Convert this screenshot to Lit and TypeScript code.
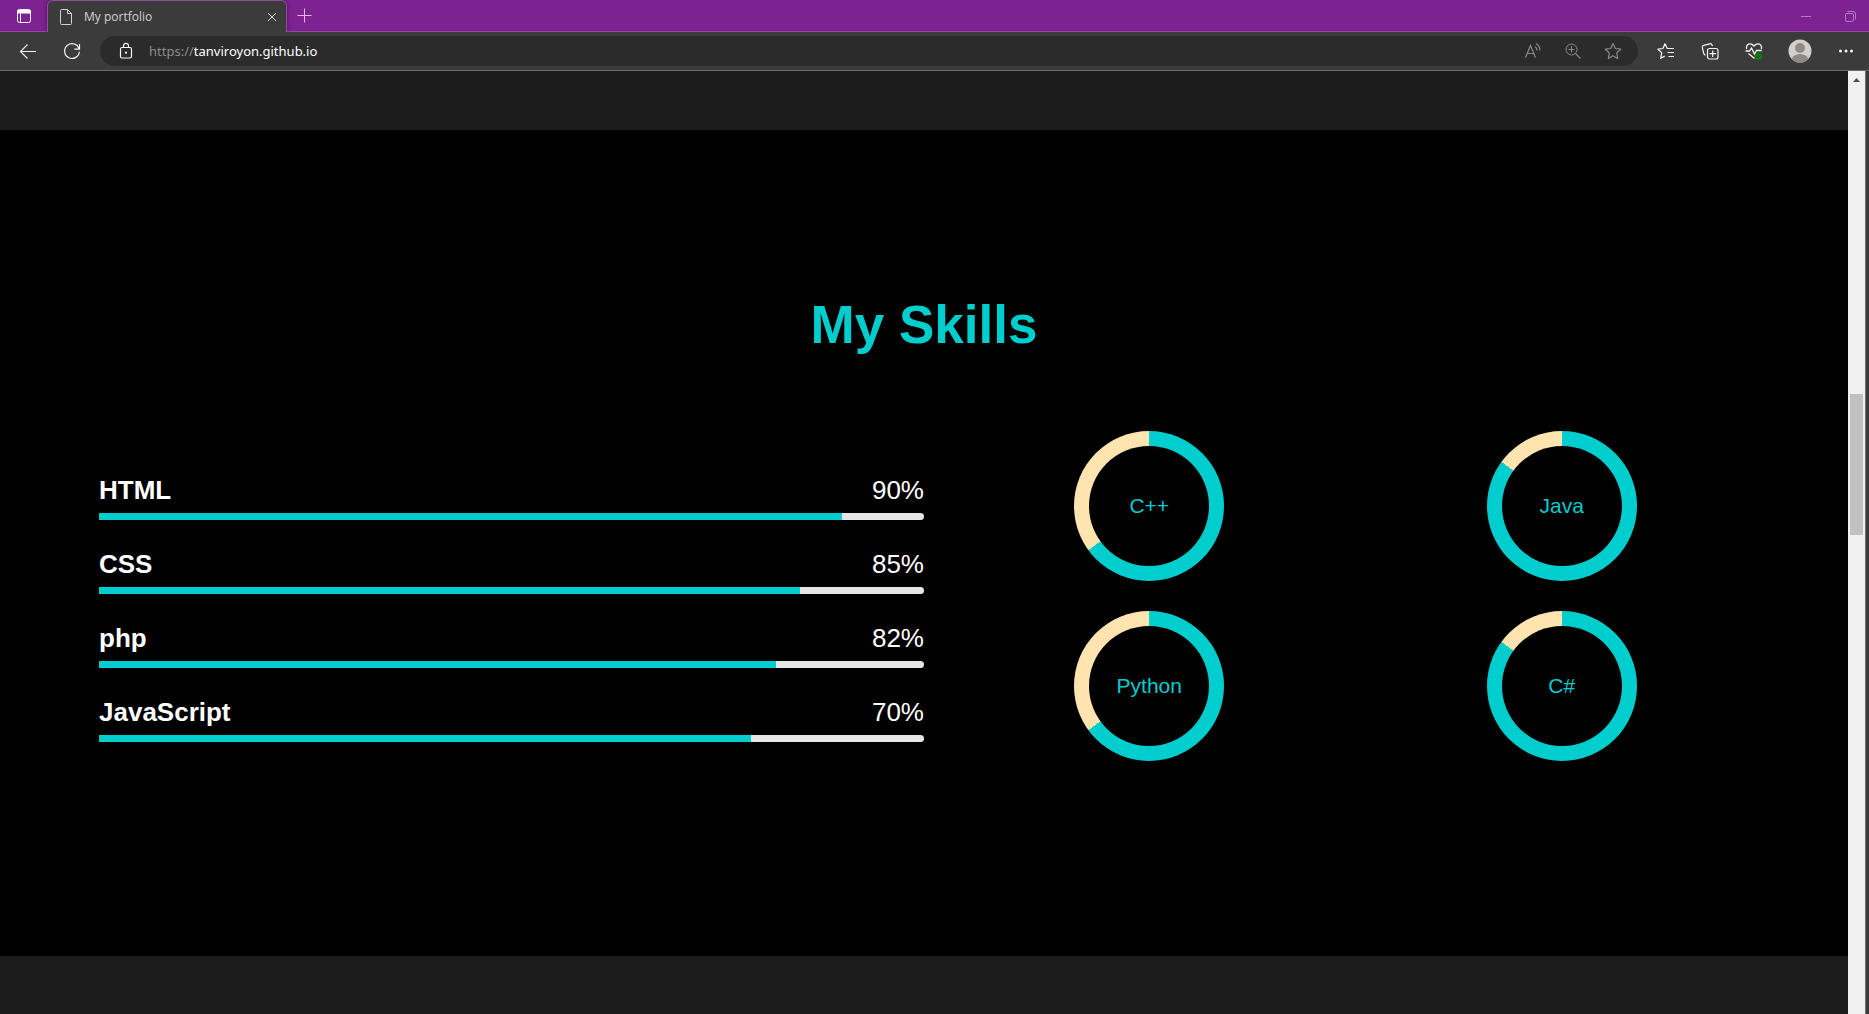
import { LitElement, html, css, svg } from "lit";
import { customElement, property } from "lit/decorators.js";

interface Skill {
  name: string;
  label: string;
  fill: number;
}

const BARS: Skill[] = [
  { name: "HTML", label: "90%", fill: 90 },
  { name: "CSS", label: "85%", fill: 85 },
  { name: "php", label: "82%", fill: 82 },
  { name: "JavaScript", label: "70%", fill: 79 },
];

const RINGS = [
  { name: "C++", fill: 65 },
  { name: "Java", fill: 85 },
  { name: "Python", fill: 65 },
  { name: "C#", fill: 85 },
];

const GLYPHS = {
  tabs: svg`<rect x="3.5" y="3.5" width="13" height="13" rx="2"/><path d="M3.5 4.5h13v2.5h-13z" fill="currentColor"/><path d="M6.5 7v9.5"/>`,
  file: svg`<path d="M5.5 2.5h6l4 4v10a1 1 0 0 1-1 1h-9a1 1 0 0 1-1-1v-13a1 1 0 0 1 1-1zM11.5 2.5v4h4"/>`,
  close: svg`<path d="M6 6l8 8M14 6l-8 8"/>`,
  plus: svg`<path d="M10.5 3.5v14M3.5 10.5h14"/>`,
  minimise: svg`<path d="M5 10.5h10"/>`,
  restore: svg`<rect x="5.5" y="7.5" width="8" height="8" rx="1.5"/><path d="M7.5 5.5h5.5a2.5 2.5 0 0 1 2.5 2.5v5.5"/>`,
  back: svg`<path d="M18 10.5H2.5M9.5 3.5l-7 7 7 7" stroke-width="1.1"/>`,
  reload: svg`<path d="M17.2 8.200A7.4 7.4 0 1 0 17.4 10.8M17.5 3v5.2h-5.2" stroke-width="1.2"/>`,
  lock: svg`<rect x="4.5" y="6.5" width="11" height="10.5" rx="1.5" stroke-width="1.2"/><path d="M7.500 6.5V4.800a2.500 2.500 0 0 1 5 0v1.7" stroke-width="1.2"/><circle cx="10" cy="11.7" r="1.1" fill="currentColor" stroke="none"/>`,
  read: svg`<path d="M2.500 16.500L7.500 4.500l5 12M4.200 12.500h6.600M12 5.500a5 5 0 0 1 2 4M13 2.500a8 8 0 0 1 4 7" stroke-width="1.2"/>`,
  zoom: svg`<circle cx="8.500" cy="8.500" r="5.500"/><path d="M12.500 12.500l5 5M8.500 5.500v6M5.500 8.500h6" stroke-width="1.1"/>`,
  star: svg`<path d="M10 2.500l2.300 5 5.400.7-4 3.800 1 5.500L10 14.800l-4.700 2.700 1-5.500-4-3.800 5.400-.7z" stroke-width="1.2" stroke-linejoin="round"/>`,
  favorites: svg`<path d="M12.200 7.500H11.300L9 2.700 6.900 7.500l-4.900.7 3.700 3.600-1 5.500 4-2.200M11.500 7.500H18M11.500 11.500H18M12.500 15.500H18" stroke-width="1.2" stroke-linejoin="round"/>`,
  collections: svg`<rect x="7.500" y="7.500" width="10.500" height="10.500" rx="2" stroke-width="1.2"/><path d="M12.700 9.500v6.500M9.500 12.700h6.500M5.600 14a2 2 0 0 1-1.800-1.500L2.300 6.700a2 2 0 0 1 1.400-2.300l6-1.600a2 2 0 0 1 2.400 1.400l.3 1" stroke-width="1.2"/>`,
  health: svg`<path d="M2.600 8C1.800 4.500 4 2.900 6 2.900c1.800 0 3 1 4 2.100 1-1.100 2.200-2.100 4-2.100 2 0 4.200 1.600 3.400 5.100M1.500 10h4L7.500 7l3 6 2-3.500h5.300M4.500 12.500l6 5" stroke-width="1.3"/><circle cx="14.500" cy="15.500" r="3.800" fill="#0f7a10" stroke="none"/><path d="M12.800 15.700l1.200 1.100 2.200-2.400" stroke="#0a4f0c"/>`,
  more: svg`<g fill="currentColor" stroke="none"><circle cx="4.500" cy="10" r="1.500"/><circle cx="10" cy="10" r="1.500"/><circle cx="15.500" cy="10" r="1.500"/></g>`,
};

const glyph = (name: keyof typeof GLYPHS) => html`<svg
  class="glyph"
  viewBox="0 0 20 20"
  fill="none"
  stroke="currentColor"
  aria-hidden="true"
>${GLYPHS[name]}</svg>`;

const controls = css`
  :host {
    display: block;
    font-family: "Open Sans", "Noto Sans", sans-serif;
  }
  * {
    box-sizing: border-box;
  }
  button {
    display: flex;
    align-items: center;
    justify-content: center;
    flex: none;
    margin: 0;
    padding: 0;
    border: 0;
    background: none;
    color: inherit;
    font: inherit;
  }
  .glyph {
    display: block;
    flex: none;
    width: 20px;
    height: 20px;
  }
`;

@customElement("tab-strip")
export class TabStrip extends LitElement {
  static styles = [
    controls,
    css`
      .strip {
        display: flex;
        height: 32px;
        background: #7d2291;
        box-shadow: inset 0 -1px #8f4d9c;
        color: #fff;
      }
      .switcher {
        width: 47px;
        height: 32px;
      }
      .tab {
        display: flex;
        align-items: center;
        width: 240px;
        height: 32px;
        padding: 0 4px 0 8px;
        border: 1px solid #8f4d9c;
        border-bottom: 0;
        border-radius: 6px 6px 0 0;
        background: #3b3b3b;
        box-shadow: 0 0 4px #4d125c;
        clip-path: inset(0 -6px 0 -6px);
        color: #d2d2d2;
      }
      .title {
        flex: 1;
        padding-left: 8px;
        font-size: 12px;
        line-height: 16px;
      }
      .close {
        width: 20px;
        height: 30px;
      }
      .add {
        width: 34px;
        height: 30px;
        color: #dcb8e2;
      }
      .window {
        display: flex;
        margin-left: auto;
        color: #b07bbc;
      }
      .window button {
        width: 50px;
        height: 32px;
      }
      .window .last {
        width: 38px;
      }
    `,
  ];

  render() {
    return html`
      <div class="strip">
        <button class="switcher" aria-label="Tab actions">${glyph("tabs")}</button>
        <div class="tab">
          ${glyph("file")}
          <span class="title">My portfolio</span>
          <button class="close" aria-label="Close tab">${glyph("close")}</button>
        </div>
        <button class="add" aria-label="New tab">${glyph("plus")}</button>
        <div class="window">
          <button aria-label="Minimize">${glyph("minimise")}</button>
          <button class="last" aria-label="Restore">${glyph("restore")}</button>
        </div>
      </div>
    `;
  }
}

@customElement("address-bar")
export class AddressBar extends LitElement {
  static styles = [
    controls,
    css`
      .bar {
        display: flex;
        align-items: center;
        height: 39px;
        padding: 0 1px 0 6px;
        border-bottom: 1px solid #6c6c6c;
        background: #3b3b3b;
        color: #f4f4f4;
      }
      .tool {
        width: 44px;
        height: 38px;
      }
      .field {
        display: flex;
        align-items: center;
        flex: 1;
        min-width: 0;
        height: 30px;
        margin: 0 6px;
        padding: 0 5px 0 6px;
        border-radius: 15px;
        background: #2b2b2b;
        font-family: "Noto Sans", "Open Sans", sans-serif;
        font-size: 13px;
        line-height: 20px;
      }
      .inner {
        width: 40px;
        height: 30px;
      }
      .scheme {
        padding-left: 3px;
        color: #8b8b8b;
      }
      .url {
        flex: 1;
        min-width: 0;
        padding: 0;
        border: 0;
        outline: 0;
        background: none;
        color: #fff;
        font: inherit;
      }
      .dim {
        color: #8b8b8b;
      }
      .profile {
        width: 48px;
        height: 38px;
      }
      .avatar {
        display: block;
        width: 24px;
        height: 24px;
      }
    `,
  ];

  render() {
    return html`
      <div class="bar">
        <button class="tool" aria-label="Back">${glyph("back")}</button>
        <button class="tool" aria-label="Refresh">${glyph("reload")}</button>
        <div class="field">
          <button class="inner" aria-label="Site information">${glyph("lock")}</button>
          <label class="scheme" for="url">https://</label>
          <input class="url" id="url" type="text" .value=${"tanviroyon.github.io"} />
          <button class="inner dim" aria-label="Read aloud">${glyph("read")}</button>
          <button class="inner dim" aria-label="Zoom">${glyph("zoom")}</button>
          <button class="inner dim" aria-label="Add to favorites">${glyph("star")}</button>
        </div>
        <button class="tool" aria-label="Favorites">${glyph("favorites")}</button>
        <button class="tool" aria-label="Collections">${glyph("collections")}</button>
        <button class="tool" aria-label="Browser essentials">${glyph("health")}</button>
        <button class="profile" aria-label="Profile">
          <svg class="avatar" viewBox="0 0 24 24" aria-hidden="true">
            <clipPath id="disc"><circle cx="12" cy="12" r="11.5" /></clipPath>
            <circle cx="12" cy="12" r="11.5" fill="#d3d0cc" />
            <circle cx="12" cy="9" r="5" fill="#8e8a86" />
            <ellipse cx="12" cy="21" rx="8.5" ry="6" fill="#8e8a86" clip-path="url(#disc)" />
          </svg>
        </button>
        <button class="tool" aria-label="Settings and more">${glyph("more")}</button>
      </div>
    `;
  }
}

@customElement("skill-bar")
export class SkillBar extends LitElement {
  @property({ attribute: false }) skill!: Skill;

  static styles = css`
    :host {
      display: block;
      font-size: 26px;
      line-height: 30px;
      color: #fff;
    }
    .head {
      display: flex;
      justify-content: space-between;
      padding-bottom: 8px;
    }
    .name {
      font-weight: 700;
    }
    .track {
      height: 7px;
      border-radius: 0 4px 4px 0;
      overflow: hidden;
      background: #e6e6e6;
    }
    .fill {
      height: 7px;
      background: #00cdcd;
    }
  `;

  render() {
    const { name, label, fill } = this.skill;
    return html`
      <div class="head"><span class="name">${name}</span><span>${label}</span></div>
      <div class="track"><div class="fill" style="width:${fill}%"></div></div>
    `;
  }
}

@customElement("skill-ring")
export class SkillRing extends LitElement {
  @property() name = "";
  @property({ type: Number }) fill = 0;

  static styles = css`
    :host {
      display: block;
    }
    .ring {
      display: grid;
      place-items: center;
      width: 150px;
      height: 150px;
      border-radius: 50%;
    }
    .hole {
      display: grid;
      place-items: center;
      width: 120px;
      height: 120px;
      border-radius: 50%;
      background: #000;
      color: #00cdcd;
      font-size: 21px;
      line-height: 24px;
    }
  `;

  render() {
    return html`
      <div class="ring" style="background:conic-gradient(#00cdcd ${this.fill}%, #ffe4b0 0)">
        <div class="hole">${this.name}</div>
      </div>
    `;
  }
}

@customElement("app-root")
export class AppRoot extends LitElement {
  static styles = css`
    :host {
      display: flex;
      flex-direction: column;
      min-height: 100vh;
      background: #1b1b1b;
      font-family: "Liberation Sans", Arial, sans-serif;
    }
    * {
      box-sizing: border-box;
    }
    .viewport {
      display: flex;
      flex: 1;
      border-right: 3px solid #3b3b3b;
    }
    .page {
      flex: 1;
      min-width: 0;
      padding-top: 59px;
    }
    .skills {
      padding: 163px 80px 195px 99px;
      background: #000;
    }
    .heading {
      margin: 0;
      padding-right: 19px;
      text-align: center;
      color: #00cdcd;
      font-size: 53px;
      line-height: 64px;
    }
    .columns {
      display: grid;
      grid-template-columns: 1fr 1fr;
      column-gap: 19px;
      align-items: center;
      padding-top: 74px;
    }
    .bars {
      display: grid;
      row-gap: 29px;
      padding-top: 24px;
    }
    .rings {
      display: grid;
      grid-template-columns: 1fr 1fr;
      row-gap: 30px;
      justify-items: center;
    }
    .scrollbar {
      display: flex;
      flex-direction: column;
      align-items: center;
      width: 18px;
      border-right: 1px solid #6c6c6c;
      background: #f1f1f1;
    }
    .arrow {
      width: 7px;
      height: 4px;
      margin: 7px 0 312px;
      background: #505050;
      clip-path: polygon(50% 0, 100% 100%, 0 100%);
    }
    .thumb {
      width: 13px;
      height: 141px;
      background: #c1c1c1;
    }
  `;

  render() {
    return html`
      <tab-strip></tab-strip>
      <address-bar></address-bar>
      <div class="viewport">
        <main class="page">
          <section class="skills">
            <h1 class="heading">My Skills</h1>
            <div class="columns">
              <div class="bars">
                ${BARS.map((s) => html`<skill-bar .skill=${s}></skill-bar>`)}
              </div>
              <div class="rings">
                ${RINGS.map((r) => html`<skill-ring name=${r.name} fill=${r.fill}></skill-ring>`)}
              </div>
            </div>
          </section>
        </main>
        <div class="scrollbar" aria-hidden="true">
          <div class="arrow"></div>
          <div class="thumb"></div>
        </div>
      </div>
    `;
  }
}
